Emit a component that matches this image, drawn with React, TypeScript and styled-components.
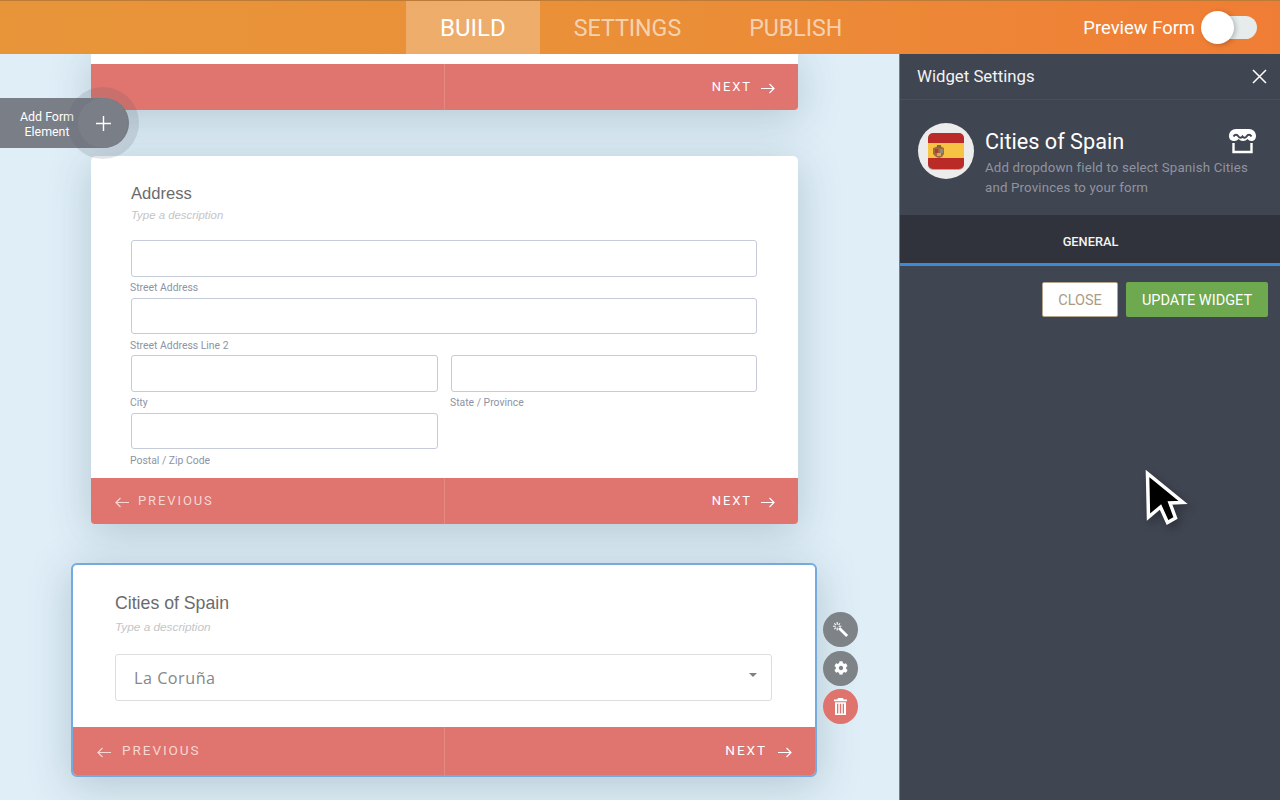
import React from 'react';
import styled, { createGlobalStyle } from 'styled-components';
import { FaCog } from 'react-icons/fa';

const GlobalStyle = createGlobalStyle`
  html, body {
    margin: 0;
    height: 100%;
    overflow: hidden;
    background: #dfeef7;
    font-family: 'Roboto', 'Liberation Sans', sans-serif;
  }
  * {
    box-sizing: border-box;
  }
`;

const Page = styled.div`
  width: 1280px;
  height: 800px;
  display: flex;
  flex-direction: column;
  overflow: hidden;
`;

// top bar
const Header = styled.header`
  height: 54px;
  flex: none;
  display: grid;
  grid-template-columns: 406px auto 1fr;
  background: linear-gradient(90deg, #e8953a 0%, #ea8f38 50%, #f07d35 100%);
  border-top: 1px solid #bd7b38;
`;

const Nav = styled.nav`
  grid-column: 2;
  display: flex;
`;

const NavTab = styled.a<{ $active?: boolean }>`
  height: 53px;
  padding: 0 34px;
  display: flex;
  align-items: center;
  font-size: ${(p) => (p.$active ? '24px' : '23.2px')};
  font-weight: 400;
  color: ${(p) => (p.$active ? '#fff' : 'rgba(255,255,255,.62)')};
  background: ${(p) => (p.$active ? 'rgba(255,255,255,.25)' : 'transparent')};
`;

const PreviewBox = styled.div`
  grid-column: 3;
  display: flex;
  align-items: center;
  justify-content: flex-end;
  gap: 6px;
  padding-right: 23px;
  color: #fff;
  font-size: 18.4px;
`;

const ToggleTrack = styled.div`
  position: relative;
  width: 52px;
  height: 23px;
  margin-left: 4px;
  border-radius: 12px;
  background: #e6ebeb;
`;

const ToggleKnob = styled.div`
  position: absolute;
  left: -4px;
  top: -5px;
  width: 33px;
  height: 33px;
  border-radius: 50%;
  background: #fff;
  box-shadow: 2px 1px 5px rgba(0, 0, 0, 0.22);
`;

const Main = styled.div`
  position: relative;
  flex: 1;
  min-height: 0;
  display: flex;
`;

// left canvas with the form cards
const Canvas = styled.main`
  width: 899px;
  flex: none;
  overflow: hidden;
  padding-left: 91px;
  background: #dfeef7;
  display: flex;
  flex-direction: column;
  align-items: flex-start;
`;

const Card = styled.section`
  width: 707px;
  flex: none;
  background: #fff;
  border-radius: 0 0 5px 5px;
  box-shadow: 0 8px 42px rgba(70, 100, 120, 0.28);
`;

const ClippedCard = styled(Card)`
  padding-top: 10px;
  margin-bottom: 46px;
`;

const AddressCard = styled(Card)`
  border-radius: 5px;
  margin-bottom: 39px;
`;

const SelectedCard = styled(Card)`
  position: relative;
  width: 746px;
  margin-left: -20px;
  border: 2px solid #74aade;
  border-radius: 6px;
`;

const CardBody = styled.div`
  height: 322px;
  padding: 28px 40px 0;
`;

const SelectedBody = styled.div`
  height: 162px;
  padding: 28px 43px 0 42px;
`;

const FieldTitle = styled.h3<{ $large?: boolean }>`
  margin: 0;
  font-family: 'Liberation Sans', Arial, sans-serif;
  font-weight: 400;
  font-size: ${(p) => (p.$large ? '17.7px' : '16.6px')};
  line-height: 20px;
  color: #6b6b6d;
`;

const Description = styled.p<{ $large?: boolean }>`
  margin: ${(p) => (p.$large ? '6px' : '3px')} 0 0;
  font-family: 'Liberation Sans', Arial, sans-serif;
  font-style: italic;
  font-size: ${(p) => (p.$large ? '11.8px' : '11.4px')};
  line-height: 16px;
  color: #c4c5c8;
`;

const AddressGrid = styled.div`
  margin-top: 17px;
  display: grid;
  grid-template-columns: 307px 306px;
  column-gap: 13px;
`;

const AddressField = styled.div<{ $wide?: boolean }>`
  grid-column: ${(p) => (p.$wide ? '1 / -1' : 'auto')};
  height: 57.6px;
`;

const TextBox = styled.div`
  height: 36.5px;
  background: #fff;
  border: 1px solid #c5cbd8;
  border-radius: 3px;
`;

const SubLabel = styled.div`
  margin: 4.5px 0 0 -1px;
  font-size: 10.4px;
  line-height: 13px;
  color: #8d93a5;
`;

const SelectBox = styled.div`
  margin-top: 19px;
  height: 47px;
  padding: 0 14px 0 18px;
  display: flex;
  align-items: center;
  justify-content: space-between;
  border: 1px solid #dcdddf;
  border-radius: 3px;
  font-family: 'Open Sans', 'DejaVu Sans', sans-serif;
  font-size: 16.2px;
  letter-spacing: 0.5px;
  color: #85878a;
`;

const Caret = styled.span`
  width: 0;
  height: 0;
  margin-top: -5px;
  border-left: 4px solid transparent;
  border-right: 4px solid transparent;
  border-top: 4px solid #7f7f80;
`;

const Footer = styled.div<{ $tall?: boolean }>`
  height: ${(p) => (p.$tall ? '48px' : '46px')};
  display: grid;
  grid-template-columns: ${(p) => (p.$tall ? '371px 1fr' : '353px 1fr')};
  background: #e0746e;
  border-radius: 0 0 4px 4px;
  overflow: hidden;
`;

const FooterCell = styled.div<{ $next?: boolean; $tall?: boolean }>`
  display: flex;
  align-items: center;
  gap: ${(p) => (p.$tall ? '10px' : '8px')};
  justify-content: ${(p) => (p.$next ? 'flex-end' : 'flex-start')};
  padding: ${(p) => (p.$next ? '0 23px 2px 0' : '0 0 2px 24px')};
  border-left: ${(p) => (p.$next ? '1px solid #e58882' : 'none')};
  font-size: ${(p) => (p.$tall ? '13.6px' : '13px')};
  letter-spacing: 1.9px;
  color: ${(p) => (p.$next ? '#ffffff' : '#f8d6d2')};
`;

const NavArrow = styled.svg`
  width: 15px;
  height: 11px;
  margin-top: 5px;
  flex: none;
  fill: none;
  stroke: currentColor;
  stroke-width: 1.2;
`;

const ArrowLeft = () => (
  <NavArrow viewBox="0 0 15 11">
    <path d="M14 5.5H1M5.5 1L1 5.5 5.5 10" />
  </NavArrow>
);

const ArrowRight = () => (
  <NavArrow viewBox="0 0 15 11">
    <path d="M1 5.5h13M9.5 1L14 5.5 9.5 10" />
  </NavArrow>
);

// floating add button
const AddElement = styled.div`
  position: absolute;
  left: 0;
  top: 44px;
  width: 129px;
  height: 50px;
  padding: 1px 35px 0 0;
  display: flex;
  align-items: center;
  justify-content: center;
  text-align: center;
  font-size: 12.4px;
  line-height: 15px;
  color: #fff;
  background: #7a7e87;
  border-radius: 0 25px 25px 0;
`;

const AddHalo = styled.div`
  position: absolute;
  right: -10px;
  top: -11px;
  width: 72px;
  height: 72px;
  display: flex;
  align-items: center;
  justify-content: center;
  border-radius: 50%;
  background: rgba(90, 95, 105, 0.17);
`;

const AddCircle = styled.div`
  width: 50px;
  height: 50px;
  display: flex;
  align-items: center;
  justify-content: center;
  border-radius: 50%;
  background: #7a7e87;
`;

const PlusIcon = styled.svg`
  width: 17px;
  height: 17px;
  stroke: #fff;
  stroke-width: 1.4;
`;

// actions beside the selected card
const CardActions = styled.div`
  position: absolute;
  left: 750px;
  top: 47px;
  display: flex;
  flex-direction: column;
  gap: 3.5px;
`;

const ActionButton = styled.button<{ $danger?: boolean }>`
  width: 35px;
  height: 35px;
  padding: 0;
  border: none;
  border-radius: 50%;
  display: flex;
  align-items: center;
  justify-content: center;
  color: #fff;
  font-size: 14px;
  background: ${(p) => (p.$danger ? '#df736d' : '#7e8387')};
`;

const WandIcon = styled.svg`
  width: 17px;
  height: 17px;
  stroke: #fff;
  fill: none;
`;

const TrashIcon = styled.svg`
  width: 13px;
  height: 17px;
  fill: #fff;
`;

// right settings panel
const Panel = styled.aside`
  position: relative;
  flex: 1;
  background: #3f4551;
  border-left: 1px solid #777b84;
  color: #fff;
`;

const PanelHeader = styled.div`
  height: 46px;
  padding: 0 12px 2px 17px;
  display: flex;
  align-items: center;
  justify-content: space-between;
  font-size: 16.8px;
  color: #f2f3f4;
  border-bottom: 1px solid #4a4f5b;
`;

const CloseIcon = styled.svg`
  width: 17px;
  height: 17px;
  margin-top: 1px;
  stroke: #fff;
  stroke-width: 1.5;
`;

const WidgetInfo = styled.div`
  height: 115px;
  padding: 23px 24px 0 18px;
  display: flex;
  gap: 11px;
`;

const FlagCircle = styled.div`
  width: 56px;
  height: 56px;
  flex: none;
  display: flex;
  align-items: center;
  justify-content: center;
  border-radius: 50%;
  background: #ececec;
`;

const WidgetText = styled.div`
  flex: 1;
  min-width: 0;
`;

const WidgetTitleRow = styled.div`
  display: flex;
  justify-content: space-between;
  align-items: flex-start;
  height: 35px;
`;

const WidgetTitle = styled.h2`
  margin: 5px 0 0;
  font-weight: 400;
  font-size: 21.7px;
  line-height: 28px;
  color: #fff;
`;

const StoreIcon = styled.svg`
  width: 27px;
  height: 27px;
  margin-top: 5px;
  flex: none;
`;

const WidgetDesc = styled.p`
  margin: 0;
  font-size: 13.3px;
  line-height: 20px;
  letter-spacing: 0.15px;
  color: #8f94a0;
`;

const TabBar = styled.div`
  height: 51px;
  display: flex;
  align-items: center;
  justify-content: center;
  padding: 5px 0 0 1px;
  background: #30333b;
  border-bottom: 3px solid #3d8bd6;
  font-size: 12.8px;
  font-weight: 500;
  color: #f4f4f4;
`;

const ButtonRow = styled.div`
  padding: 16px 12px 0 0;
  display: flex;
  justify-content: flex-end;
  gap: 8px;
`;

const CloseButton = styled.button`
  width: 76px;
  height: 35px;
  padding: 2px 0 0;
  background: #fff;
  border: 1px solid #b5a48e;
  border-radius: 2px;
  font-family: inherit;
  font-size: 14.5px;
  color: #ab9b85;
`;

const UpdateButton = styled.button`
  width: 142px;
  height: 35px;
  padding: 2px 0 0;
  background: #6ea84f;
  border: none;
  border-radius: 2px;
  font-family: inherit;
  font-size: 14.5px;
  color: #fff;
`;

const Cursor = styled.svg`
  position: absolute;
  left: 244px;
  top: 416px;
  width: 44px;
  height: 58px;
  filter: drop-shadow(3px 4px 4px rgba(0, 0, 0, 0.3));
`;

const SpainFlag = () => (
  <svg width="36" height="37" viewBox="0 0 36 37">
    <rect x="0" y="1" width="36" height="36" rx="5" fill="#a9a9a9" />
    <rect x="0" y="0" width="36" height="36" rx="5" fill="#ba2a26" />
    <rect x="0" y="10" width="36" height="15" fill="#f6c342" />
    <path d="M8 14l3-2 3 2 2 1v6l-2 3-3 1-3-1-3-3v-6z" fill="#a5683f" />
    <rect x="9" y="12" width="4" height="3" fill="#7d6a45" />
    <rect x="7" y="16" width="3" height="4" fill="#b23a30" />
    <rect x="12" y="16" width="3" height="4" fill="#8f8a7a" />
    <rect x="9" y="20" width="4" height="3" fill="#d6a94a" />
  </svg>
);

const App: React.FC = () => {
  return (
    <Page>
      <GlobalStyle />
      <Header>
        <Nav>
          <NavTab $active>BUILD</NavTab>
          <NavTab>SETTINGS</NavTab>
          <NavTab>PUBLISH</NavTab>
        </Nav>
        <PreviewBox>
          Preview Form
          <ToggleTrack>
            <ToggleKnob />
          </ToggleTrack>
        </PreviewBox>
      </Header>

      <Main>
        <Canvas>
          <ClippedCard>
            <Footer>
              <FooterCell />
              <FooterCell $next>
                NEXT <ArrowRight />
              </FooterCell>
            </Footer>
          </ClippedCard>

          <AddressCard>
            <CardBody>
              <FieldTitle>Address</FieldTitle>
              <Description>Type a description</Description>
              <AddressGrid>
                <AddressField $wide>
                  <TextBox />
                  <SubLabel>Street Address</SubLabel>
                </AddressField>
                <AddressField $wide>
                  <TextBox />
                  <SubLabel>Street Address Line 2</SubLabel>
                </AddressField>
                <AddressField>
                  <TextBox />
                  <SubLabel>City</SubLabel>
                </AddressField>
                <AddressField>
                  <TextBox />
                  <SubLabel>State / Province</SubLabel>
                </AddressField>
                <AddressField>
                  <TextBox />
                  <SubLabel>Postal / Zip Code</SubLabel>
                </AddressField>
              </AddressGrid>
            </CardBody>
            <Footer>
              <FooterCell>
                <ArrowLeft /> PREVIOUS
              </FooterCell>
              <FooterCell $next>
                NEXT <ArrowRight />
              </FooterCell>
            </Footer>
          </AddressCard>

          <SelectedCard>
            <SelectedBody>
              <FieldTitle $large>Cities of Spain</FieldTitle>
              <Description $large>Type a description</Description>
              <SelectBox>
                La Coruña
                <Caret />
              </SelectBox>
            </SelectedBody>
            <Footer $tall>
              <FooterCell $tall>
                <ArrowLeft /> PREVIOUS
              </FooterCell>
              <FooterCell $next $tall>
                NEXT <ArrowRight />
              </FooterCell>
            </Footer>
            <CardActions>
              <ActionButton>
                <WandIcon viewBox="0 0 18 18">
                  <path d="M7.5 7.5l8.5 8.5" strokeWidth="3" />
                  <path d="M5.5 1v3M5.5 7v3M1 5.500h3M7 5.500h3M2.500 2.500l1.500 1.500M8.500 2.500L7 4M2.500 8.500L4 7" strokeWidth="1.2" />
                </WandIcon>
              </ActionButton>
              <ActionButton>
                <FaCog />
              </ActionButton>
              <ActionButton $danger>
                <TrashIcon viewBox="0 0 13 17">
                  <path d="M4 0h5l.6 1.600H13v1.600H0V1.600h3.400L4 0zM1 4.200h11V17H1V4.200zm2 1.600v9.600h1.300V5.800H3zm2.800 0v9.600h1.400V5.800H5.800zm2.900 0v9.600H10V5.800H8.700z" fillRule="evenodd" />
                </TrashIcon>
              </ActionButton>
            </CardActions>
          </SelectedCard>
        </Canvas>

        <AddElement>
          <span>
            Add Form
            <br />
            Element
          </span>
          <AddHalo>
            <AddCircle>
              <PlusIcon viewBox="0 0 17 17">
                <path d="M8.500 1v15M1 8.500h15" />
              </PlusIcon>
            </AddCircle>
          </AddHalo>
        </AddElement>

        <Panel>
          <PanelHeader>
            Widget Settings
            <CloseIcon viewBox="0 0 17 17">
              <path d="M2 2l13 13M15 2L2 15" />
            </CloseIcon>
          </PanelHeader>
          <WidgetInfo>
            <FlagCircle>
              <SpainFlag />
            </FlagCircle>
            <WidgetText>
              <WidgetTitleRow>
                <WidgetTitle>Cities of Spain</WidgetTitle>
                <StoreIcon viewBox="0 0 27 27">
                  <path d="M7 1h13c4 0 7 3 7 7 0 3-2 5-4.500 5-1.800 0-3-1-4-2-1 1-2.500 2-4.500 2s-3-1-4.500-2c-1 1-2.200 2-4 2C2 13 0 11 0 8c0-4 3-7 7-7z" fill="#fff" />
                  <path d="M4.500 8.500C6 6 8 6 9.500 8.500c1 1.500 3 1.500 4 0 1 1.500 3 1.500 4 0C19 6 21 6 22.500 8.500" fill="none" stroke="#3f4551" strokeWidth="2" />
                  <path d="M4.500 15v9h18v-9" fill="none" stroke="#fff" strokeWidth="2.400" />
                </StoreIcon>
              </WidgetTitleRow>
              <WidgetDesc>
                Add dropdown field to select Spanish Cities
                <br />
                and Provinces to your form
              </WidgetDesc>
            </WidgetText>
          </WidgetInfo>
          <TabBar>GENERAL</TabBar>
          <ButtonRow>
            <CloseButton>CLOSE</CloseButton>
            <UpdateButton>UPDATE WIDGET</UpdateButton>
          </ButtonRow>
          <Cursor viewBox="0 0 44 58">
            <path d="M3.500 3.500L4.500 47l12-10 7 15.500 8-4.500-5.500-15 13-.5z" fill="#000" stroke="#fff" strokeWidth="3.500" />
          </Cursor>
        </Panel>
      </Main>
    </Page>
  );
};

export default App;
